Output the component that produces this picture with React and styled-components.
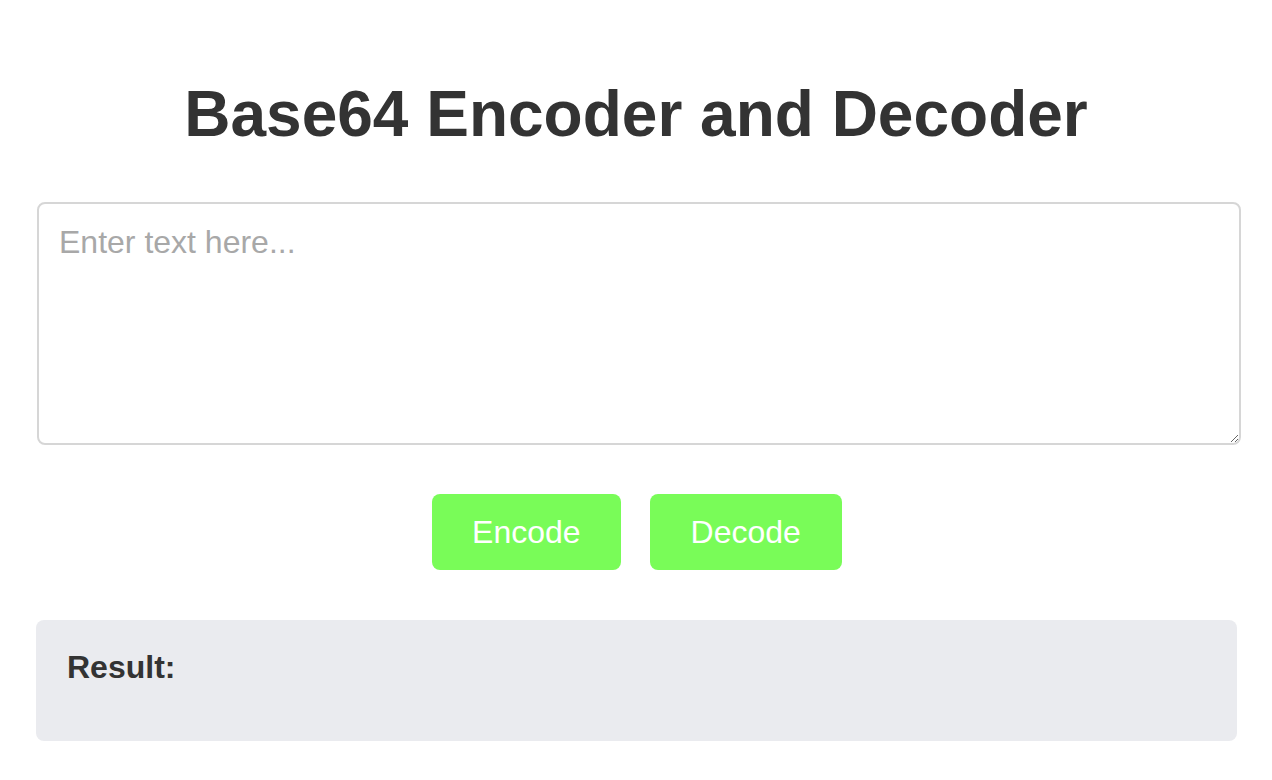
import React from "react";
import styled, { createGlobalStyle } from "styled-components";

const GlobalStyle = createGlobalStyle`
  html, body {
    margin: 0;
    padding: 0;
    background: #ffffff;
    font-family: "Liberation Sans", Arial, sans-serif;
  }
`;

const Page = styled.main`
  width: 1200px;
  margin: 0 auto;
  padding-top: 77px;
  display: flex;
  flex-direction: column;
`;

const Title = styled.h1`
  margin: 0;
  font-size: 64px;
  line-height: 74px;
  font-weight: 700;
  color: #333333;
  text-align: center;
`;

const Input = styled.textarea`
  display: block;
  box-sizing: border-box;
  width: 1204px;
  height: 243px;
  margin: 51px 0 0 1px;
  padding: 20px;
  border: 2px solid #d6d6d6;
  border-radius: 8px;
  font-family: "Liberation Sans", Arial, sans-serif;
  font-size: 32px;
  color: #333333;
  outline: none;
  resize: both;

  &::placeholder {
    color: #a8a8a8;
  }
`;

const Actions = styled.div`
  display: flex;
  justify-content: center;
  gap: 29px;
  margin-top: 49px;
  padding-left: 2px;
`;

const ActionButton = styled.button`
  box-sizing: border-box;
  height: 76px;
  padding: 0 ${(p) => (p.$wide ? 41 : 40)}px;
  border: none;
  border-radius: 8px;
  background: #79fc58;
  color: #ffffff;
  font-family: "Liberation Sans", Arial, sans-serif;
  font-size: 32px;
  cursor: pointer;
`;

const ResultBox = styled.section`
  box-sizing: border-box;
  width: 1201px;
  height: 121px;
  margin-top: 50px;
  padding: 29px 31px;
  background: #eaebef;
  border-radius: 8px;
`;

const ResultLabel = styled.h3`
  margin: 0;
  font-size: 32px;
  line-height: 37px;
  font-weight: 700;
  color: #333333;
`;

export default function App() {
  return (
    <>
      <GlobalStyle />
      <Page>
        <Title>Base64 Encoder and Decoder</Title>
        <Input placeholder="Enter text here..." />
        <Actions>
          <ActionButton>Encode</ActionButton>
          <ActionButton $wide>Decode</ActionButton>
        </Actions>
        <ResultBox>
          <ResultLabel>Result:</ResultLabel>
        </ResultBox>
      </Page>
    </>
  );
}
